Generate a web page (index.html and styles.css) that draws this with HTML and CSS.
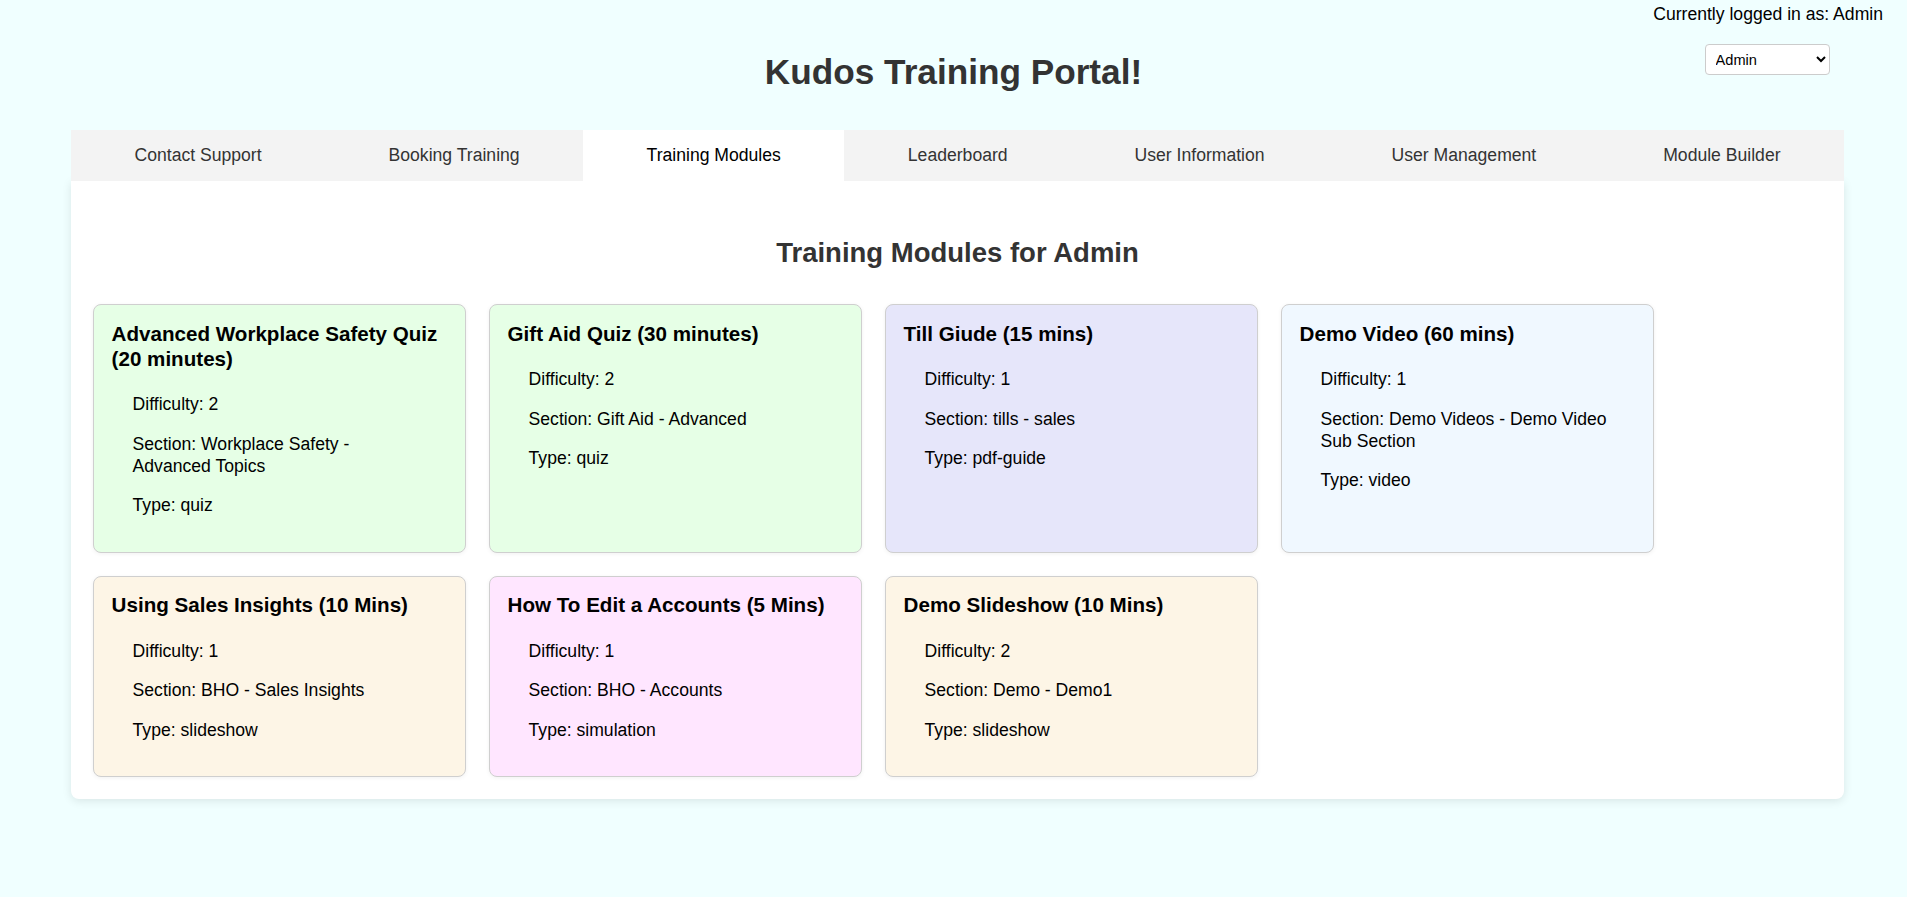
FILE: index.html
```html
<!DOCTYPE html>
<html lang="en">
<head>
<meta charset="utf-8">
<title>Kudos Training Portal</title>
<link rel="stylesheet" href="styles.css">
</head>
<body>
<header class="top">
  <div class="spacer"></div>
  <h1 class="site-title">Kudos Training Portal!</h1>
  <div class="user-info">
    <div class="user-label">Currently logged in as: Admin</div>
    <select class="user-select">
      <option>Admin</option>
    </select>
  </div>
</header>

<nav class="tabs">
  <div class="tab">Contact Support</div>
  <div class="tab">Booking Training</div>
  <div class="tab active">Training Modules</div>
  <div class="tab">Leaderboard</div>
  <div class="tab">User Information</div>
  <div class="tab">User Management</div>
  <div class="tab">Module Builder</div>
</nav>

<main class="panel">
  <h2 class="panel-title">Training Modules for Admin</h2>
  <div class="cards">
    <div class="card green">
      <h3>Advanced Workplace Safety Quiz (20 minutes)</h3>
      <p>Difficulty: 2</p>
      <p>Section: Workplace Safety - Advanced Topics</p>
      <p>Type: quiz</p>
    </div>
    <div class="card green">
      <h3>Gift Aid Quiz (30 minutes)</h3>
      <p>Difficulty: 2</p>
      <p>Section: Gift Aid - Advanced</p>
      <p>Type: quiz</p>
    </div>
    <div class="card lavender">
      <h3>Till Giude (15 mins)</h3>
      <p>Difficulty: 1</p>
      <p>Section: tills - sales</p>
      <p>Type: pdf-guide</p>
    </div>
    <div class="card blue">
      <h3>Demo Video (60 mins)</h3>
      <p>Difficulty: 1</p>
      <p>Section: Demo Videos - Demo Video Sub Section</p>
      <p>Type: video</p>
    </div>
    <div class="card cream">
      <h3>Using Sales Insights (10 Mins)</h3>
      <p>Difficulty: 1</p>
      <p>Section: BHO - Sales Insights</p>
      <p>Type: slideshow</p>
    </div>
    <div class="card pink">
      <h3>How To Edit a Accounts (5 Mins)</h3>
      <p>Difficulty: 1</p>
      <p>Section: BHO - Accounts</p>
      <p>Type: simulation</p>
    </div>
    <div class="card cream">
      <h3>Demo Slideshow (10 Mins)</h3>
      <p>Difficulty: 2</p>
      <p>Section: Demo - Demo1</p>
      <p>Type: slideshow</p>
    </div>
  </div>
</main>
</body>
</html>
```
FILE: styles.css
```css
html, body {
  margin: 0;
  padding: 0;
}

body {
  background: #f0ffff;
  font-family: "Liberation Sans", Arial, sans-serif;
  font-size: 17.6px;
  color: #000;
  min-height: 897px;
}

.top {
  display: grid;
  grid-template-columns: 1fr auto 1fr;
  align-items: start;
}

.site-title {
  margin: 52px 0 0;
  font-size: 35.2px;
  line-height: 40px;
  font-weight: bold;
  color: #333;
  text-align: center;
}

.user-info {
  justify-self: end;
  display: flex;
  flex-direction: column;
  align-items: center;
  padding: 4px 24px 0 0;
}

.user-label {
  line-height: 21px;
  color: #000;
}

.user-select {
  margin: 19px 2px 0 0;
  width: 125px;
  height: 31px;
  font-family: "Liberation Sans", Arial, sans-serif;
  font-size: 14.6px;
  padding: 0 6px;
  border: 1px solid #ccc;
  border-radius: 4px;
  background: #fff;
  color: #000;
}

.tabs {
  display: flex;
  margin: 38px 63px 0 71px;
  background: #f3f3f3;
  position: relative;
  z-index: 1;
}

.tab {
  flex: 1 1 auto;
  text-align: center;
  padding: 15px 0 16px;
  line-height: 20px;
  color: #333;
  white-space: nowrap;
}

.tab.active {
  background: #fff;
  color: #000;
}

.panel {
  display: block;
  margin: 0 63px 0 71px;
  padding: 22px;
  background: #fff;
  border-radius: 0 0 8px 8px;
  box-shadow: 0 2px 10px rgba(0, 0, 0, 0.1);
}

.panel-title {
  margin: 34px 0 35px;
  font-size: 27.5px;
  line-height: 32px;
  font-weight: bold;
  color: #333;
  text-align: center;
}

.cards {
  display: flex;
  flex-wrap: wrap;
  gap: 23px 23px;
}

.card {
  width: 373px;
  box-sizing: border-box;
  padding: 15.6px 17.6px 17.6px;
  border: 1px solid #cfcfcf;
  border-radius: 8px;
  box-shadow: 0 1px 4px rgba(0, 0, 0, 0.06);
}

.card h3 {
  margin: 0 0 22.6px;
  font-size: 20.6px;
  line-height: 25px;
  font-weight: bold;
  color: #000;
}

.card p {
  margin: 17.6px 21px;
  line-height: 22px;
}

.card h3 + p {
  margin-top: 0;
}

.green { background: #e6ffe6; }
.lavender { background: #e6e6fa; }
.blue { background: #f0f8ff; }
.cream { background: #fdf5e6; }
.pink { background: #ffe6ff; }
```
